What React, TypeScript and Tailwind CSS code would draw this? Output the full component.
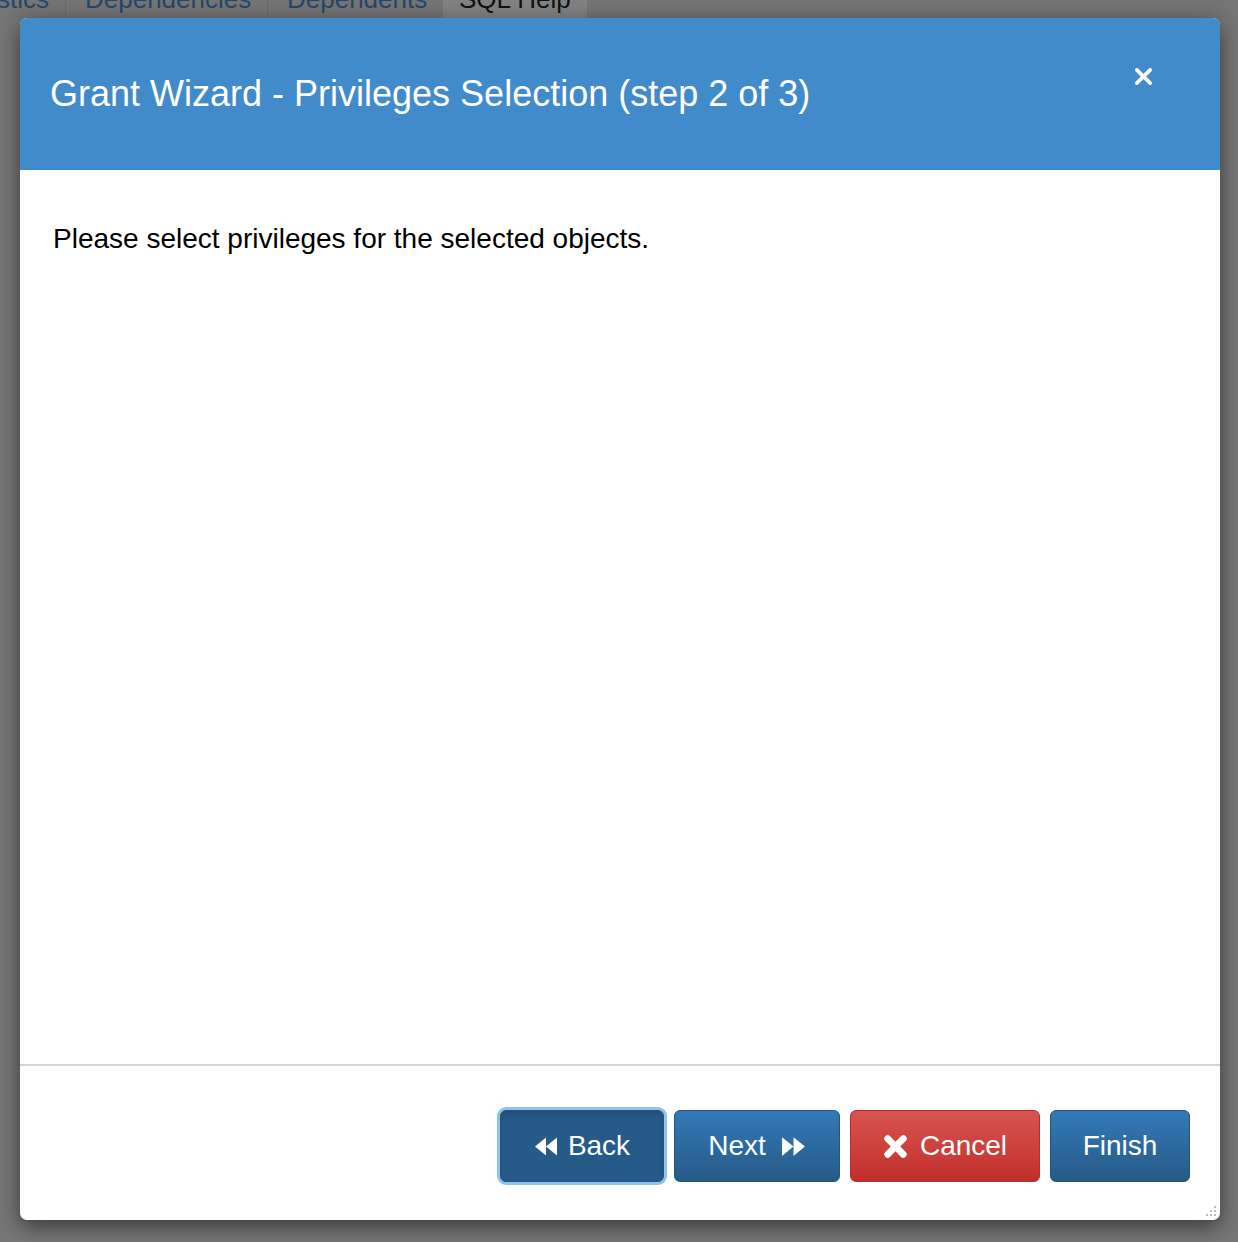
import React from 'react';

function BackwardIcon() {
  return (
    <svg viewBox="0 0 24 18" className="w-[24px] h-[19px]" fill="currentColor">
      <path d="M12 0 L12 18 L1 9 Z" />
      <path d="M23 0 L23 18 L12 9 Z" />
    </svg>
  );
}

function ForwardIcon() {
  return (
    <svg viewBox="0 0 24 18" className="w-[25px] h-[19px]" fill="currentColor">
      <path d="M1 0 L1 18 L12 9 Z" />
      <path d="M12 0 L12 18 L23 9 Z" />
    </svg>
  );
}

function TimesIcon() {
  return (
    <svg viewBox="0 0 24 24" className="w-[25px] h-[25px]" fill="none" stroke="currentColor" strokeWidth="6.5" strokeLinecap="round">
      <path d="M4.5 4.5 L19.5 19.5" />
      <path d="M19.5 4.5 L4.5 19.5" />
    </svg>
  );
}

export default function App() {
  return (
    <div className="w-[1238px] h-[1242px] bg-[#777777] overflow-hidden font-['Liberation_Sans',Arial,sans-serif]">
      {/* Tab strip behind the dialog */}
      <div className="h-[18px] overflow-hidden flex text-[26px] leading-[30px] bg-[#757575]">
        <div className="-mt-[16px] flex">
          <div className="w-[66px] text-[#24486b] border-r border-[#6a6a6a] text-right pr-[16px] whitespace-nowrap overflow-hidden">
            <span className="-ml-[60px]">stics</span>
          </div>
          <div className="w-[202px] px-[19px] text-[#24486b] border-r border-[#6a6a6a] whitespace-nowrap">Dependencies</div>
          <div className="w-[175px] px-[19px] text-[#24486b] whitespace-nowrap">Dependents</div>
          <div className="w-[144px] px-[16px] text-[#111] bg-[#828282] whitespace-nowrap">SQL Help</div>
        </div>
      </div>

      {/* Dialog */}
      <div className="ml-[20px] w-[1200px] h-[1202px] bg-white rounded-[7px] shadow-[0_6px_22px_rgba(0,0,0,0.55)] flex flex-col relative">
        <div className="h-[152px] bg-[#428bca] rounded-t-[7px] flex items-center pl-[30px] relative">
          <h1 className="text-white text-[36px] leading-[40px]">
            Grant Wizard - Privileges Selection (step 2 of 3)
          </h1>
          <button className="absolute left-[1114px] top-[49px] text-white leading-none">
            <svg viewBox="0 0 20 20" className="w-[19px] h-[19px]" fill="none" stroke="currentColor" strokeWidth="3.8" strokeLinecap="round">
              <path d="M3 3 L17 17" />
              <path d="M17 3 L3 17" />
            </svg>
          </button>
        </div>

        <div className="flex-1 pl-[33px] pt-[53px]">
          <p className="text-[28px] leading-[32px] text-black">Please select privileges for the selected objects.</p>
        </div>

        <div className="border-t-2 border-[#d4d4d4] h-[156px] flex justify-end items-start pt-[44px] pr-[30px] gap-[10px]">
          <button className="w-[164px] h-[72px] rounded-[6px] bg-[#265a88] border border-[#245580] text-white text-[28px] flex items-center justify-center gap-[10px] shadow-[inset_0_3px_5px_rgba(0,0,0,0.125),0_0_0_3px_rgba(102,175,233,0.75)]">
            <BackwardIcon />
            <span>Back</span>
          </button>
          <button className="w-[166px] h-[72px] rounded-[6px] bg-gradient-to-b from-[#337ab7] to-[#265a88] border border-[#245580] text-white text-[28px] flex items-center justify-center gap-[15px]">
            <span>Next</span>
            <ForwardIcon />
          </button>
          <button className="w-[190px] h-[72px] rounded-[6px] bg-gradient-to-b from-[#d9534f] to-[#c12e2a] border border-[#b92c28] text-white text-[28px] flex items-center justify-center gap-[12px]">
            <TimesIcon />
            <span>Cancel</span>
          </button>
          <button className="w-[140px] h-[72px] rounded-[6px] bg-gradient-to-b from-[#337ab7] to-[#265a88] border border-[#245580] text-white text-[28px] flex items-center justify-center">
            <span>Finish</span>
          </button>
        </div>

        {/* resize grip */}
        <svg className="absolute right-[2px] bottom-[2px] w-[16px] h-[16px]" viewBox="0 0 16 16" fill="#bbbbbb">
          <rect x="12" y="4" width="2" height="2" />
          <rect x="8" y="8" width="2" height="2" />
          <rect x="12" y="8" width="2" height="2" />
          <rect x="4" y="12" width="2" height="2" />
          <rect x="8" y="12" width="2" height="2" />
          <rect x="12" y="12" width="2" height="2" />
        </svg>
      </div>
    </div>
  );
}
